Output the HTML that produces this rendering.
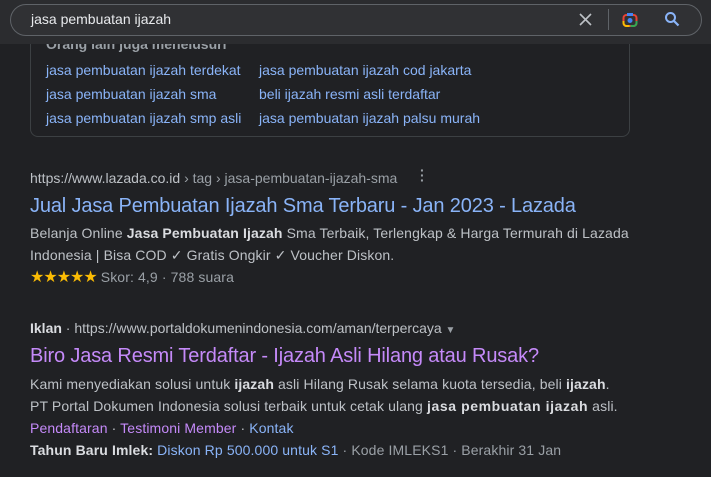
<!DOCTYPE html><html><head><style>
body{margin:0;width:711px;height:477px;background:#202124;font-family:"Liberation Sans",Arial,sans-serif;color:#bdc1c6;overflow:hidden;position:relative}
.a{position:absolute;white-space:nowrap}
.hd{position:absolute;left:0;top:0;width:711px;height:44px;background:#2b2c2f;z-index:2}
.sb{position:absolute;left:10px;top:4px;width:690px;height:30px;border:1px solid #5f6368;border-radius:17px;background:#303134}
.box{position:absolute;left:30px;top:20px;width:598px;height:115px;border:1px solid #3c4043;border-radius:8px}
.l{color:#8ab4f8;font-size:14px}
.t{font-size:14px;line-height:22px;letter-spacing:.12px}
b{color:#dadce0}
</style></head><body>
<div class="box"></div>
<div class="a" style="left:46px;top:36px;font-size:14px;font-weight:bold;color:#9aa0a6">Orang lain juga menelusuri</div>
<div class="hd"><div class="sb"></div>
<div class="a" style="left:31px;top:11px;font-size:14px;color:#e8eaed">jasa pembuatan ijazah</div>
<svg class="a" style="left:579px;top:13px" width="13" height="13"><path d="M1 1L12 12M12 1L1 12" stroke="#bdc1c6" stroke-width="1.6"/></svg>
<div class="a" style="left:608px;top:9px;width:1px;height:21px;background:#5f6368"></div>
<svg class="a" style="left:622px;top:12px" width="16" height="16"><rect x="1.5" y="3" width="13" height="11" rx="3" fill="none" stroke="#ea4335" stroke-width="2"/><path d="M1.5 9v2a3 3 0 0 0 3 3h3" stroke="#fbbc04" stroke-width="2" fill="none"/><path d="M14.5 9v2a3 3 0 0 1-3 3h-3" stroke="#34a853" stroke-width="2" fill="none"/><circle cx="8" cy="8.5" r="2.5" fill="#4285f4"/><rect x="5" y="1" width="6" height="3" fill="#4285f4"/></svg>
<svg class="a" style="left:664px;top:11px" width="16" height="16"><circle cx="6.5" cy="6.5" r="4.5" fill="none" stroke="#8ab4f8" stroke-width="2"/><path d="M10 10L14.5 14.5" stroke="#8ab4f8" stroke-width="2.2"/></svg>
</div>
<div class="a l" style="left:46px;top:62px">jasa pembuatan ijazah terdekat</div>
<div class="a l" style="left:259px;top:62px">jasa pembuatan ijazah cod jakarta</div>
<div class="a l" style="left:46px;top:86px">jasa pembuatan ijazah sma</div>
<div class="a l" style="left:259px;top:86px">beli ijazah resmi asli terdaftar</div>
<div class="a l" style="left:46px;top:110px">jasa pembuatan ijazah smp asli</div>
<div class="a l" style="left:259px;top:110px">jasa pembuatan ijazah palsu murah</div>

<div class="a" style="left:30px;top:170px;font-size:14px;color:#bdc1c6">https://www.lazada.co.id <span style="color:#9aa0a6">› tag › jasa-pembuatan-ijazah-sma</span></div>
<div class="a" style="left:420px;top:168px;font-size:14px;color:#9aa0a6;line-height:5px;font-weight:bold">·<br>·<br>·</div>
<div class="a" style="left:30px;top:195px;font-size:20px;color:#8ab4f8;letter-spacing:-.15px">Jual Jasa Pembuatan Ijazah Sma Terbaru - Jan 2023 - Lazada</div>
<div class="a t" style="left:30px;top:222px">Belanja Online <b>Jasa Pembuatan Ijazah</b> Sma Terbaik, Terlengkap &amp; Harga Termurah di Lazada<br>Indonesia | Bisa COD ✓ Gratis Ongkir ✓ Voucher Diskon.<br><span style="color:#fbbc04;font-size:16px;letter-spacing:-1px">★★★★★</span> <span style="color:#9aa0a6">Skor: 4,9 · 788 suara</span></div>

<div class="a" style="left:30px;top:320px;font-size:14px"><b>Iklan</b> · https://www.portaldokumenindonesia.com/aman/terpercaya <span style="color:#9aa0a6;font-size:10px">▼</span></div>
<div class="a" style="left:30px;top:345px;font-size:20px;color:#c58af9;letter-spacing:-.15px">Biro Jasa Resmi Terdaftar - Ijazah Asli Hilang atau Rusak?</div>
<div class="a t" style="left:30px;top:373px">Kami menyediakan solusi untuk <b>ijazah</b> asli Hilang Rusak selama kuota tersedia, beli <b>ijazah</b>.<br>PT Portal Dokumen Indonesia solusi terbaik untuk cetak ulang <b style="letter-spacing:.6px">jasa pembuatan ijazah</b> asli.<br><span style="color:#c58af9">Pendaftaran</span> · <span style="color:#c58af9">Testimoni Member</span> · <span style="color:#8ab4f8">Kontak</span><br><b>Tahun Baru Imlek:</b> <span style="color:#8ab4f8">Diskon Rp 500.000 untuk S1</span> <span style="color:#9aa0a6">· Kode IMLEKS1 · Berakhir 31 Jan</span></div>
</body></html>
